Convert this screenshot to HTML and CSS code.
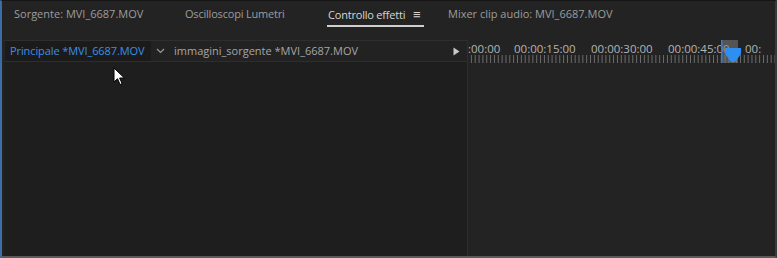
FILE: index.html
```html
<!DOCTYPE html>
<html>
<head>
<meta charset="utf-8">
<link rel="stylesheet" href="styles.css">
</head>
<body>
<div class="frame">
  <div class="tabs">
    <span class="tab t1">Sorgente: MVI_6687.MOV</span>
    <span class="tab t2">Oscilloscopi Lumetri</span>
    <span class="tab t3 active">Controllo effetti <span class="menu">&#8801;</span></span>
    <span class="tab t4">Mixer clip audio: MVI_6687.MOV</span>
  </div>
  <div class="panel">
    <div class="left">
      <div class="head">
        <span class="master">Principale *MVI_6687.MOV</span>
        <svg class="chev" width="9" height="6" viewBox="0 0 9 6"><path d="M1 1l3.5 3.5L8 1" fill="none" stroke="#9a9a9a" stroke-width="1.2"/></svg>
        <span class="clip">immagini_sorgente *MVI_6687.MOV</span>
        <svg class="play" width="7" height="9" viewBox="0 0 7 9"><path d="M0.5 0.5L6.5 4.5L0.5 8.5Z" fill="#c8c8c8"/></svg>
      </div>
      <div class="lbody"></div>
    </div>
    <div class="right">
      <div class="ruler">
        <div class="codes">
          <span class="c0">:00:00</span>
          <span>00:00:15:00</span>
          <span>00:00:30:00</span>
          <span>00:00:45:00</span>
          <span class="clip-end">00:</span>
        </div>
        <div class="ticks"></div>
        <div class="playhead">
          <svg width="21" height="23" viewBox="0 0 21 23"><rect x="0" y="0" width="17" height="23" fill="rgba(125,125,125,0.55)"/><rect x="0" y="0" width="1.5" height="23" fill="#2b7fe0"/><path d="M4 8h16v6l-6 8h-4l-6-8z" fill="#2f8ff0"/></svg>
        </div>
      </div>
      <div class="rbody"></div>
    </div>
  </div>
  <svg class="cursor" width="13" height="19" viewBox="0 0 13 19"><path d="M1 1v14l3.5-3.3 2.6 5.8 2-0.9-2.5-5.6h4.8z" fill="#fff" stroke="#000" stroke-width="1"/></svg>
</div>
</body>
</html>
```
FILE: styles.css
```css
html, body {
  margin: 0;
  padding: 0;
  background: #232323;
}
body {
  width: 777px;
  height: 258px;
  overflow: hidden;
  font-family: "Open Sans", "Noto Sans", sans-serif;
  font-size: 11px;
}
.frame {
  position: relative;
  box-sizing: border-box;
  width: 777px;
  height: 258px;
  background: #232323;
  border-left: 2px solid #3b6ea6;
  border-top: 1px solid #151515;
  border-bottom: 2px solid #5b5b5b;
  border-right: 2px solid #3a3a3a;
  display: flex;
  flex-direction: column;
}
.tabs {
  height: 39px;
  flex: none;
  display: flex;
  align-items: flex-start;
  color: #9d9d9d;
  white-space: nowrap;
}
.tab {
  padding-top: 6px;
  line-height: 14px;
  flex: none;
}
.t1 { margin-left: 12px; width: 171px; }
.t2 { width: 142px; letter-spacing: -0.2px; }
.t3 {
  color: #d6d6d6;
  width: 97px;
  box-sizing: border-box;
  padding-bottom: 3px;
  padding-left: 1px;
  border-bottom: 2px solid #cfcfcf;
  letter-spacing: -0.2px;
}
.menu { margin-left: 5px; font-size: 13px; }
.t4 { margin-left: 24px; }
.panel {
  flex: 1;
  display: flex;
  margin-left: 2px;
  min-height: 0;
}
.left {
  width: 464px;
  flex: none;
  box-sizing: border-box;
  display: flex;
  flex-direction: column;
  border-right: 1px solid #2e2e2e;
  background: #1e1e1e;
}
.head {
  height: 22px;
  display: flex;
  align-items: center;
  border-top: 1px solid #2e2e2e;
  border-bottom: 1px solid #2e2e2e;
  background: #222222;
  white-space: nowrap;
  box-sizing: border-box;
}
.master {
  background: #1b1b1b;
  color: #3e8fe4;
  height: 100%;
  box-sizing: border-box;
  padding: 2px 0 0 5px;
  margin-left: 1px;
  line-height: 16px;
  width: 146px;
  letter-spacing: -0.1px;
}
.chev { margin-left: 5px; }
.clip { margin-left: 9px; color: #a6a6a6; line-height: 14px; }
.play { margin-left: auto; margin-right: 7px; }
.lbody { flex: 1; }
.right {
  flex: 1;
  min-width: 0;
  display: flex;
  flex-direction: column;
  background: #232323;
}
.ruler {
  position: relative;
  height: 24px;
  overflow: hidden;
}
.codes {
  display: flex;
  height: 15px;
  color: #b4b4b4;
  font-size: 11.5px;
  line-height: 14px;
  padding-top: 2px;
  box-sizing: border-box;
  white-space: nowrap;
}
.codes span { width: 77px; flex: none; }
.codes .c0 { width: 46px; }
.ticks {
  height: 8px;
  background: repeating-linear-gradient(90deg, transparent 0 3px, #6e6e6e 3px 4px);
  background-size: 3.85px 8px;
  background-image: linear-gradient(90deg, transparent 0 2.85px, #6e6e6e 2.85px 3.85px);
}
.playhead {
  position: absolute;
  left: 253px;
  top: 0;
  line-height: 0;
}
.rbody { flex: 1; }
.cursor {
  position: absolute;
  left: 111px;
  top: 66px;
}
```
